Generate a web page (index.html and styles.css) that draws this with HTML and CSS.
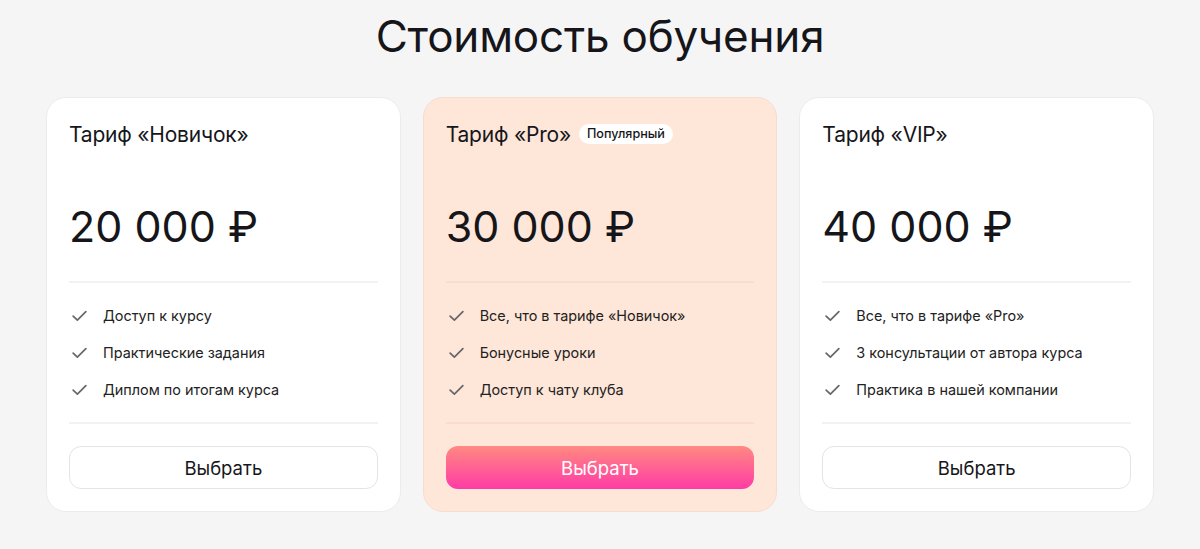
FILE: index.html
```html
<!DOCTYPE html>
<html lang="ru">
<head>
<meta charset="utf-8">
<title>Стоимость обучения</title>
<link rel="stylesheet" href="styles.css">
</head>
<body>
<section class="pricing">
  <h1 class="pricing__title">Стоимость обучения</h1>
  <div class="pricing__grid">
    <div class="card">
      <div class="card__head"><h2 class="card__name">Тариф «Новичок»</h2></div>
      <div class="card__price">20 000 ₽</div>
      <ul class="card__list">
        <li class="card__item"><svg class="check" viewBox="0 0 16 16"><path d="M2 8.5l4 3.8L14 4.3"/></svg>Доступ к курсу</li>
        <li class="card__item"><svg class="check" viewBox="0 0 16 16"><path d="M2 8.5l4 3.8L14 4.3"/></svg>Практические задания</li>
        <li class="card__item"><svg class="check" viewBox="0 0 16 16"><path d="M2 8.5l4 3.8L14 4.3"/></svg>Диплом по итогам курса</li>
      </ul>
      <button class="btn">Выбрать</button>
    </div>
    <div class="card card--pro">
      <div class="card__head"><h2 class="card__name">Тариф «Pro»</h2><span class="badge">Популярный</span></div>
      <div class="card__price">30 000 ₽</div>
      <ul class="card__list">
        <li class="card__item"><svg class="check" viewBox="0 0 16 16"><path d="M2 8.5l4 3.8L14 4.3"/></svg>Все, что в тарифе «Новичок»</li>
        <li class="card__item"><svg class="check" viewBox="0 0 16 16"><path d="M2 8.5l4 3.8L14 4.3"/></svg>Бонусные уроки</li>
        <li class="card__item"><svg class="check" viewBox="0 0 16 16"><path d="M2 8.5l4 3.8L14 4.3"/></svg>Доступ к чату клуба</li>
      </ul>
      <button class="btn btn--accent">Выбрать</button>
    </div>
    <div class="card">
      <div class="card__head"><h2 class="card__name">Тариф «VIP»</h2></div>
      <div class="card__price">40 000 ₽</div>
      <ul class="card__list">
        <li class="card__item"><svg class="check" viewBox="0 0 16 16"><path d="M2 8.5l4 3.8L14 4.3"/></svg>Все, что в тарифе «Pro»</li>
        <li class="card__item"><svg class="check" viewBox="0 0 16 16"><path d="M2 8.5l4 3.8L14 4.3"/></svg>3 консультации от автора курса</li>
        <li class="card__item"><svg class="check" viewBox="0 0 16 16"><path d="M2 8.5l4 3.8L14 4.3"/></svg>Практика в нашей компании</li>
      </ul>
      <button class="btn">Выбрать</button>
    </div>
  </div>
</section>
</body>
</html>
```
FILE: styles.css
```css
* { box-sizing: border-box; }
html, body { margin: 0; padding: 0; }
body {
  background: #f5f5f5;
  font-family: Inter, "Noto Sans", sans-serif;
  color: #16161a;
}
.pricing {
  width: 1108px;
  margin: 0 auto;
  padding-top: 7px;
}
.pricing__title {
  margin: 0;
  text-align: center;
  font-size: 44px;
  font-weight: 400;
  line-height: 58px;
  letter-spacing: -0.2px;
}
.pricing__grid {
  margin-top: 32px;
  display: grid;
  grid-template-columns: repeat(3, 1fr);
  gap: 22px;
}
.card {
  background: #fff;
  border: 1px solid #ececec;
  border-radius: 20px;
  padding: 22px;
  display: flex;
  flex-direction: column;
}
.card--pro {
  background: #fee6d9;
  border-color: #f6ddd0;
}
.card__head {
  display: flex;
  align-items: center;
  gap: 8px;
  height: 28px;
}
.card__name {
  margin: 0;
  font-size: 21px;
  font-weight: 400;
  letter-spacing: -0.2px;
}
.badge {
  background: #fff;
  border-radius: 12px;
  padding: 3px 8px;
  font-size: 12.6px;
  line-height: 14px;
  font-weight: 500;
}
.card__price {
  margin-top: 53px;
  font-size: 43px;
  line-height: 50px;
  padding-bottom: 30px;
  border-bottom: 2px solid #f2f2f2;
}
.card--pro .card__price, .card--pro .card__list { border-color: #fadccc; }
.card__list {
  list-style: none;
  margin: 0;
  padding: 14px 0;
  border-bottom: 2px solid #f2f2f2;
}
.card__item {
  display: flex;
  align-items: center;
  gap: 15px;
  height: 37px;
  font-size: 14.4px;
  color: #222;
}
.check {
  width: 17px;
  height: 17px;
  margin-left: 2px;
  fill: none;
  stroke: #66666c;
  stroke-width: 1.6;
  stroke-linecap: round;
  stroke-linejoin: round;
}
.btn {
  margin-top: 22px;
  height: 43px;
  border-radius: 12px;
  border: 1px solid #e4e4e4;
  background: #fff;
  font-family: inherit;
  font-size: 18.5px;
  color: #16161a;
}
.btn--accent {
  border: none;
  color: #fff;
  background: linear-gradient(180deg, #ff8a80 0%, #ff3ba6 100%);
}
```
